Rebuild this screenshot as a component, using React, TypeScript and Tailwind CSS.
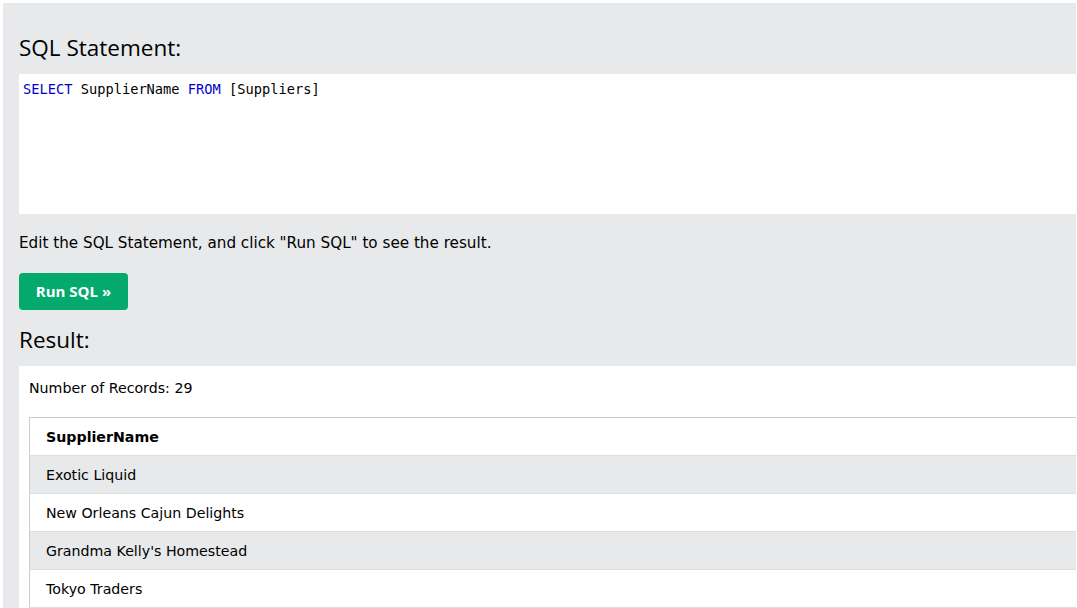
import React from 'react';

const rows = ['Exotic Liquid', 'New Orleans Cajun Delights', "Grandma Kelly's Homestead", 'Tokyo Traders'];

const App: React.FC = () => {
  return (
    <div className="w-[1077px] h-[608px] bg-white overflow-hidden pl-[3px] pt-[3px] font-['DejaVu_Sans',sans-serif]">
      <div className="w-[1073px] h-full bg-[#e7e9eb] overflow-hidden pl-4">
        {/* SQL editor */}
        <h2 className="font-['Open_Sans',sans-serif] text-[22.5px] text-black mt-[30px] leading-[30px]">SQL Statement:</h2>
        <div className="mt-[11px] w-[1100px] h-[140px] bg-white px-1 pt-[5px] font-['DejaVu_Sans_Mono',monospace] text-[13.7px] leading-5 text-black">
          <span className="text-[#0000cd]">SELECT</span> SupplierName <span className="text-[#0000cd]">FROM</span> [Suppliers]
        </div>
        <p className="mt-[19px] text-[15.2px] leading-5 text-black">Edit the SQL Statement, and click "Run SQL" to see the result.</p>
        <button className="mt-[20px] h-[37px] w-[109px] rounded bg-[#04aa6d] text-white font-['Open_Sans',sans-serif] font-bold text-[15px] flex items-center justify-center">
          Run SQL »
        </button>
        <h2 className="font-['Open_Sans',sans-serif] text-[22.5px] text-black mt-[15px] leading-[30px]">Result:</h2>

        {/* Result */}
        <div className="mt-[11px] w-[1100px] bg-white pl-[10px] pt-[12px] pb-4">
          <p className="text-[14.2px] leading-5 text-black">Number of Records: 29</p>
          <table className="mt-[19px] w-[1080px] border border-[#cccccc] border-collapse text-[14.2px] text-black">
            <tbody>
              <tr className="h-[38px] bg-white border-b border-[#dddddd]">
                <th className="text-left font-bold pl-4 pt-[2px]">SupplierName</th>
              </tr>
              {rows.map((r, i) => (
                <tr key={r} className={`h-[38px] border-b border-[#dddddd] ${i % 2 === 0 ? 'bg-[#e7e9eb]' : 'bg-white'}`}>
                  <td className="pl-4 pt-[2px]">{r}</td>
                </tr>
              ))}
            </tbody>
          </table>
        </div>
      </div>
    </div>
  );
};

export default App;
